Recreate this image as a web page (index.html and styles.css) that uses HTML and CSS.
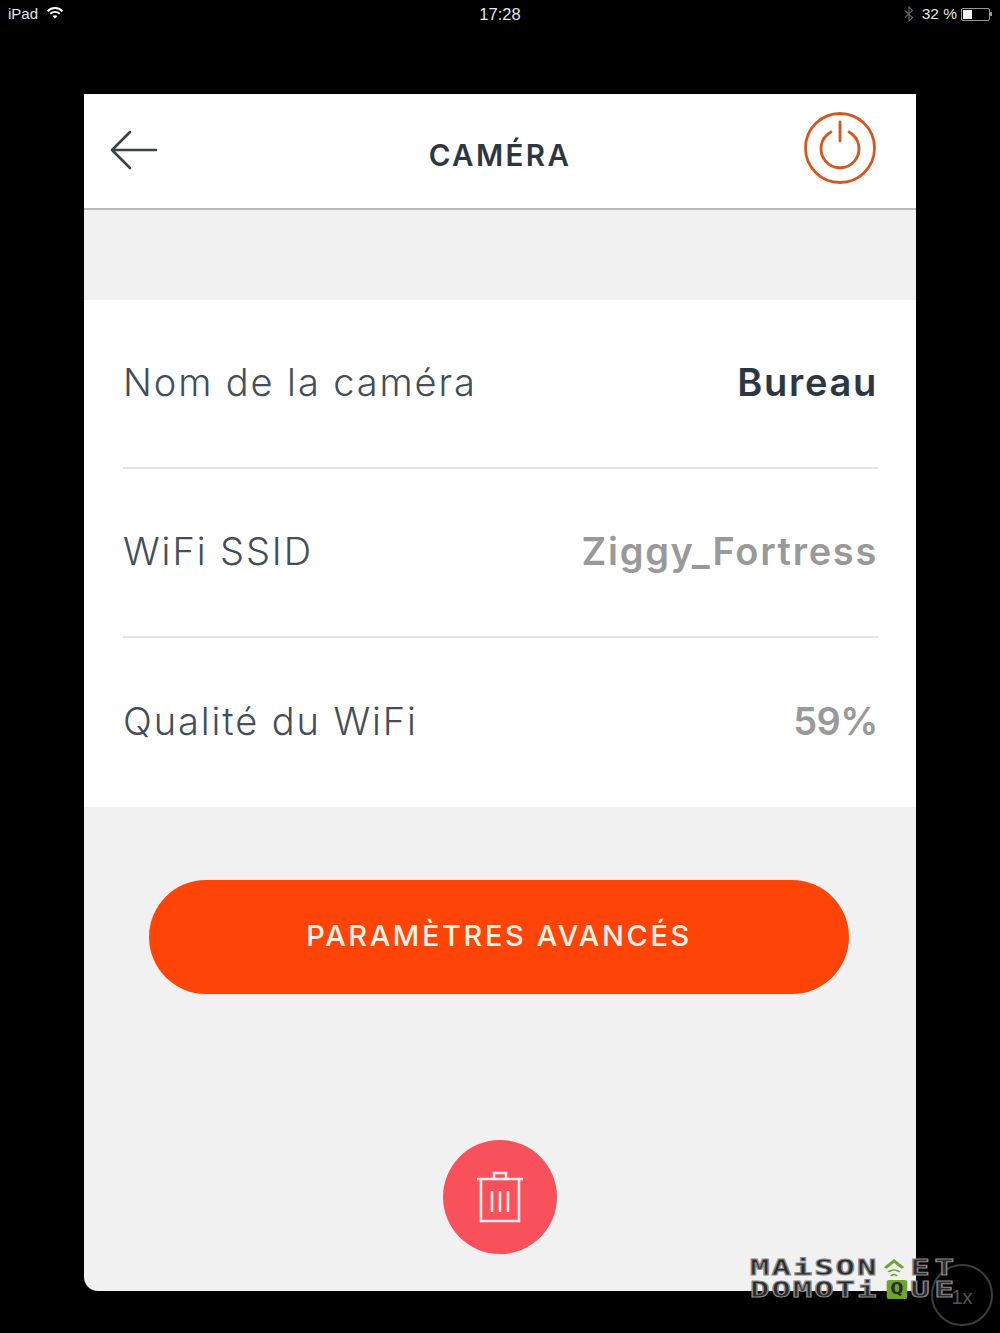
FILE: index.html
```html
<!DOCTYPE html>
<html lang="fr">
  <head>
    <meta charset="utf-8">
    <title>Caméra</title>
    <link rel="stylesheet" href="styles.css">
  </head>
  <body>
    <div class="statusbar">
      <div class="status-left">
        <span>iPad</span>
        <svg class="wifi" width="18" height="14" viewBox="0 0 18 14">
          <path d="M1.5 5.2C5.8 1 12.2 1 16.5 5.2" fill="none" stroke="#fff" stroke-width="1.9"/>
          <path d="M4.2 7.8C6.9 5.2 11.1 5.2 13.8 7.8" fill="none" stroke="#fff" stroke-width="1.9"/>
          <path d="M6.6 10.1L9 12.6L11.4 10.1C10 8.8 8 8.8 6.6 10.1Z" fill="#fff"/>
        </svg>
      </div>
      <div class="status-time">17:28</div>
      <div class="status-right">
        <svg width="10" height="16" viewBox="0 0 10 16">
          <path d="M1 4.5L8.5 11.5L5 15V1L8.5 4.5L1 11.5" fill="none" stroke="#666" stroke-width="1.1"/>
        </svg>
        <span class="battery-text">32 %</span>
        <div class="battery"><div class="battery-level"></div></div>
        <div class="battery-tip"></div>
      </div>
    </div>

    <div class="card">
      <div class="header">
        <svg class="back" width="48" height="40" viewBox="0 0 48 40">
          <path d="M46 20H2M20 2L2 20L20 38" fill="none" stroke="#39414a" stroke-width="2.6" stroke-linecap="round" stroke-linejoin="round"/>
        </svg>
        <h1>CAMÉRA</h1>
        <svg class="power" width="72" height="72" viewBox="0 0 72 72">
          <circle cx="36" cy="36" r="34.5" fill="none" stroke="#d9551c" stroke-width="2.8"/>
          <path d="M27 20A19 19 0 1 0 45 20" fill="none" stroke="#d9551c" stroke-width="2.8" stroke-linecap="round"/>
          <path d="M36 10V29" fill="none" stroke="#d9551c" stroke-width="2.8" stroke-linecap="round"/>
        </svg>
      </div>

      <div class="spacer"></div>

      <div class="list">
        <div class="row">
          <span class="label">Nom de la caméra</span>
          <span class="value value-dark">Bureau</span>
        </div>
        <div class="row">
          <span class="label">WiFi SSID</span>
          <span class="value">Ziggy_Fortress</span>
        </div>
        <div class="row">
          <span class="label">Qualité du WiFi</span>
          <span class="value value-num">59%</span>
        </div>
      </div>

      <div class="actions">
        <div class="button">PARAMÈTRES AVANCÉS</div>
        <div class="delete">
          <svg width="48" height="52" viewBox="0 0 48 52">
            <path d="M1 8H47M5 8V50H43V8M18 8V2H30V8M16 20V41M24 20V41M32 20V41" fill="none" stroke="#fdeaea" stroke-width="2.6"/>
          </svg>
        </div>
      </div>
    </div>

    <div class="speed"><span>1x</span></div>
    <div class="watermark">
      <div class="wm-line">
        <span class="wm-start">MAiSON</span>
        <svg class="wm-roof" width="16" height="20" viewBox="0 0 16 20">
          <path d="M2 10L8 3L14 10" fill="none" stroke="#6fa52f" stroke-width="2.6"/>
          <path d="M4 14Q8 10 12 14M6 18Q8 15 10 18" fill="none" stroke="#6fa52f" stroke-width="1.6"/>
        </svg>
        <span class="wm-end">ET</span>
      </div>
      <div class="wm-line">
        <span class="wm-start">DOMOTi</span>
        <span class="wm-q">Q</span>
        <span class="wm-end">UE</span>
      </div>
    </div>
  </body>
</html>
```

FILE: styles.css
```css
* {
  box-sizing: border-box;
}

html, body {
  margin: 0;
  padding: 0;
}

body {
  width: 1000px;
  height: 1333px;
  background: #000;
  font-family: "Inter", "Liberation Sans", sans-serif;
  overflow: hidden;
  position: relative;
}

.statusbar {
  height: 94px;
  padding: 4px 8px 0;
  display: grid;
  grid-template-columns: 1fr auto 1fr;
  align-items: start;
  color: #e6e6e6;
  font-family: "Liberation Sans", sans-serif;
  font-size: 15px;
  line-height: 20px;
}

.status-left {
  display: flex;
  align-items: center;
  gap: 8px;
}

.wifi {
  margin-top: -3px;
}

.status-time {
  text-align: center;
  font-size: 16.5px;
}

.status-right {
  display: flex;
  align-items: center;
  justify-content: flex-end;
}

.battery-text {
  margin-left: 8px;
  margin-right: 4px;
  font-size: 15.5px;
}

.battery {
  width: 29px;
  height: 13px;
  border: 1px solid #999;
  border-radius: 2px;
  padding: 1px;
}

.battery-level {
  width: 9px;
  height: 9px;
  background: #f2f2f2;
}

.battery-tip {
  width: 2px;
  height: 4px;
  background: #999;
}

.card {
  width: 832px;
  height: 1197px;
  margin: 0 auto;
  background: #f1f1f1;
  border-radius: 0 0 0 14px;
}

.header {
  height: 116px;
  background: #fff;
  border-bottom: 2px solid #b9b9b9;
  display: grid;
  grid-template-columns: 1fr auto 1fr;
  align-items: center;
  padding: 0 26px;
}

.header h1 {
  margin: 8px 0 0;
  font-size: 29.5px;
  font-weight: 600;
  color: #2d3741;
  letter-spacing: 2.4px;
}

.back {
  margin-top: -2px;
}

.power {
  justify-self: end;
  margin: -6px 14px 0 0;
}

.spacer {
  height: 90px;
}

.list {
  height: 507px;
  background: #fff;
  padding: 0 38px 0 39px;
  display: grid;
  grid-template-rows: 169px 169px 169px;
}

.row {
  display: flex;
  align-items: center;
  justify-content: space-between;
  border-bottom: 2px solid #e4e4e4;
  padding: 0 0 4px 0;
  font-size: 38px;
}

.row:last-child {
  border-bottom: 0;
}

.label {
  font-weight: 300;
  color: #454e56;
  letter-spacing: 1.9px;
}

.value {
  font-weight: 600;
  color: #999;
  letter-spacing: 1.7px;
}

.value-dark {
  color: #2d3741;
}

.value-num {
  letter-spacing: -0.5px;
}

.actions {
  padding: 73px 67px 0 65px;
}

.button {
  height: 114px;
  border-radius: 57px;
  background: #ff4408;
  color: #fff3e8;
  display: flex;
  align-items: center;
  justify-content: center;
  font-size: 29px;
  font-weight: 500;
  letter-spacing: 2.6px;
  padding-bottom: 4px;
}

.delete {
  width: 114px;
  height: 114px;
  margin: 146px 0 0 294px;
  border-radius: 50%;
  background: #f9515b;
  display: flex;
  align-items: center;
  justify-content: center;
}

/* the logo letters are very wide, so the whole block is stretched */
.watermark {
  position: absolute;
  left: 750px;
  top: 1258px;
  width: 142px;
  transform: scaleX(1.47);
  transform-origin: left top;
  color: #2c2c2c;
  font-family: "DejaVu Sans Mono", monospace;
  font-weight: 700;
  font-size: 22px;
  line-height: 20px;
  -webkit-text-stroke: 1px #8a8a8a;
}

.wm-line {
  display: flex;
  align-items: center;
  height: 19px;
  margin-bottom: 3px;
  white-space: nowrap;
}

.wm-start {
  width: 87px;
  letter-spacing: 1.3px;
}

.wm-roof {
  margin: 0 3px 0 3px;
}

.wm-end {
  letter-spacing: 3.2px;
}

.wm-q {
  width: 14px;
  height: 19px;
  margin: 0 2px 0 6px;
  border-radius: 2px;
  background: #6fa52f;
  color: #2c2c2c;
  -webkit-text-stroke: 0;
  font-size: 15px;
  line-height: 19px;
  text-align: center;
}

.speed {
  position: absolute;
  left: 931px;
  top: 1264px;
  width: 62px;
  height: 62px;
  border: 2px solid #3c3c3c;
  border-radius: 50%;
  color: #555;
  font-family: "Liberation Sans", sans-serif;
  font-size: 20px;
  padding-top: 4px;
  display: flex;
  align-items: center;
  justify-content: center;
}
```
